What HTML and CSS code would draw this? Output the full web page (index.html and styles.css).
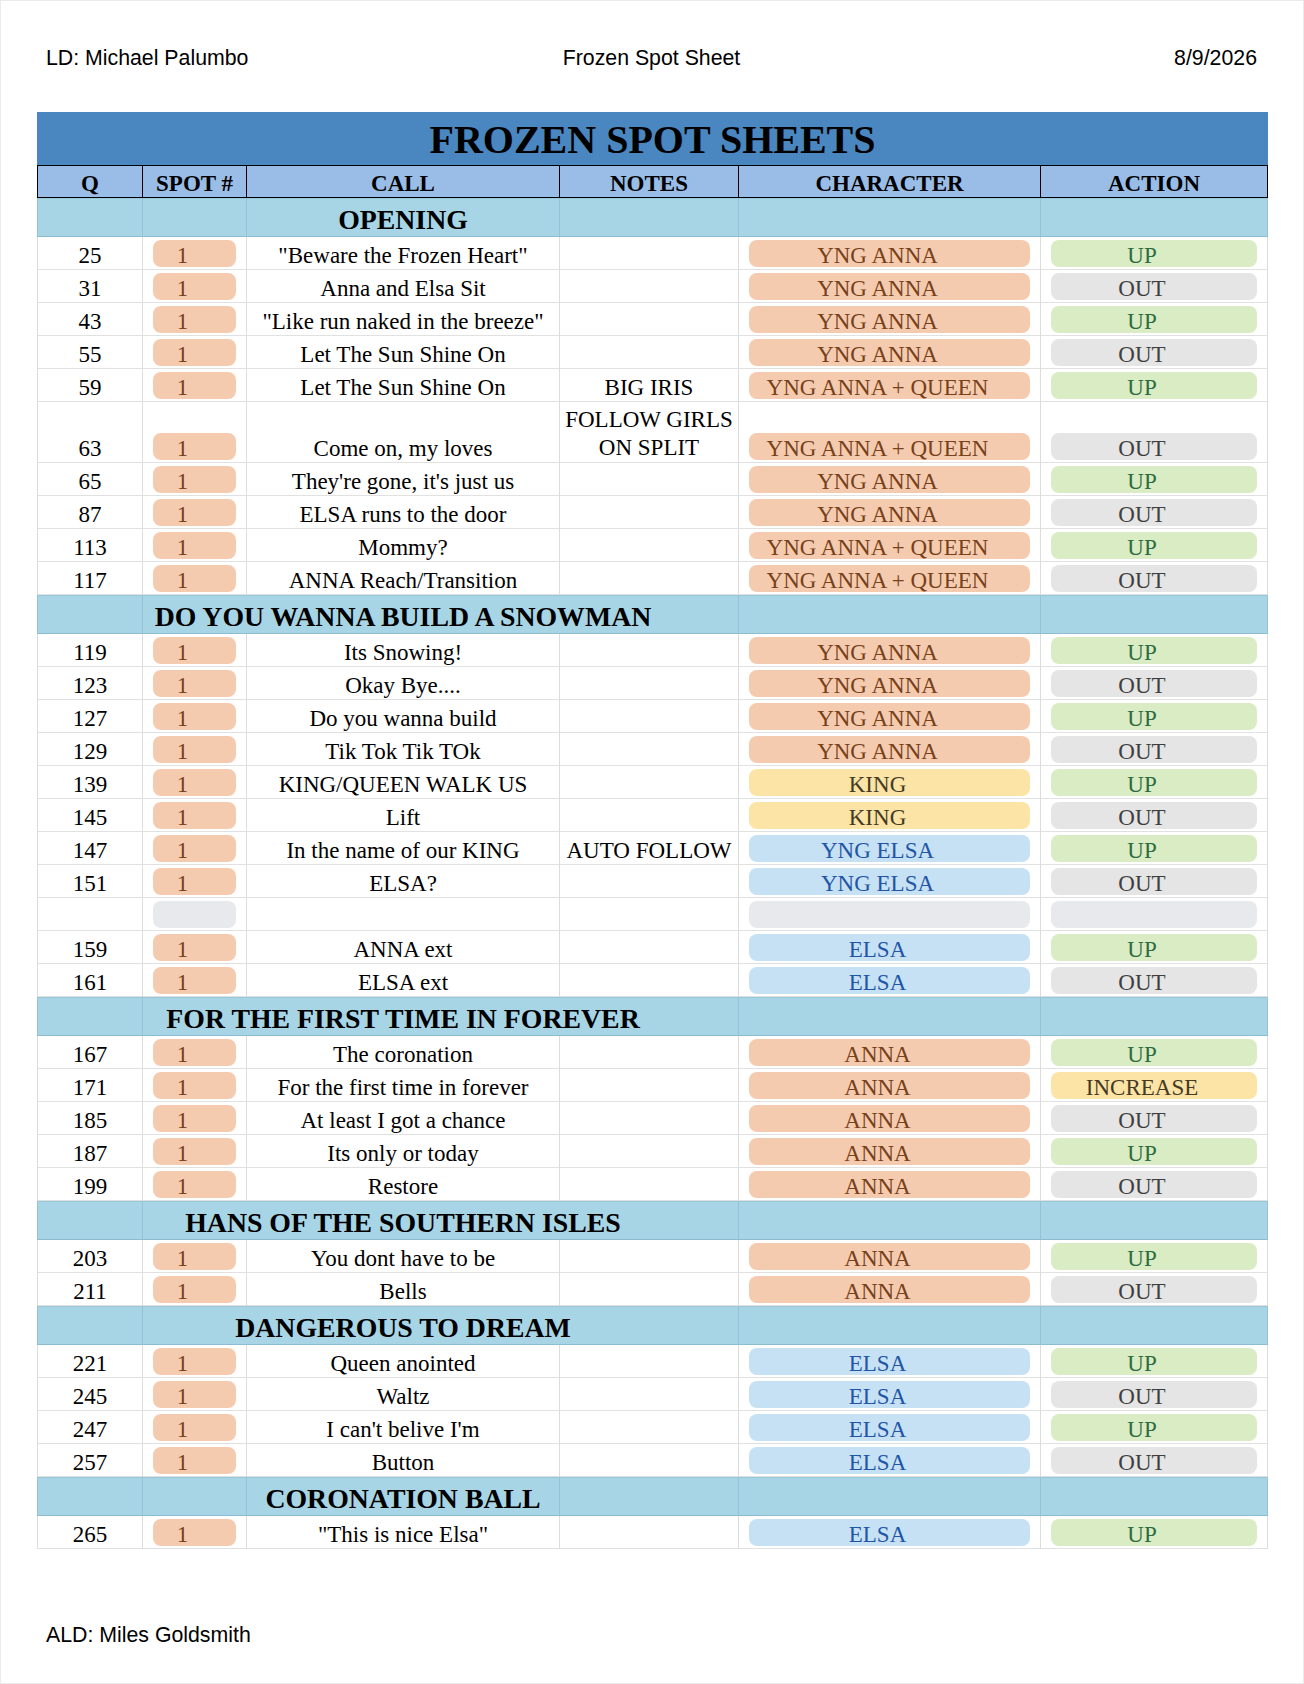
FILE: index.html
```
<!DOCTYPE html>
<html lang="en">
<head>
<meta charset="utf-8">
<title>Frozen Spot Sheet</title>
<link rel="stylesheet" href="styles.css">
</head>
<body>
<div class="page">
  <div class="topbar">
    <div class="l">LD: Michael Palumbo</div>
    <div class="c">Frozen Spot Sheet</div>
    <div class="r">8/9/2026</div>
  </div>

  <div class="sheet">
    <div class="title">FROZEN SPOT SHEETS</div>
    <div class="row head">
      <div>Q</div><div>SPOT #</div><div>CALL</div><div>NOTES</div><div>CHARACTER</div><div>ACTION</div>
    </div>

    <div class="row sec"><div></div><div></div><div class="name"><span>OPENING</span></div><div></div><div></div><div></div></div>
    <div class="row"><div>25</div><div><span class="pill spot">1</span></div><div>"Beware the Frozen Heart"</div><div></div><div><span class="pill anna">YNG ANNA</span></div><div><span class="pill up">UP</span></div></div>
    <div class="row"><div>31</div><div><span class="pill spot">1</span></div><div>Anna and Elsa Sit</div><div></div><div><span class="pill anna">YNG ANNA</span></div><div><span class="pill out">OUT</span></div></div>
    <div class="row"><div>43</div><div><span class="pill spot">1</span></div><div>"Like run naked in the breeze"</div><div></div><div><span class="pill anna">YNG ANNA</span></div><div><span class="pill up">UP</span></div></div>
    <div class="row"><div>55</div><div><span class="pill spot">1</span></div><div>Let The Sun Shine On</div><div></div><div><span class="pill anna">YNG ANNA</span></div><div><span class="pill out">OUT</span></div></div>
    <div class="row"><div>59</div><div><span class="pill spot">1</span></div><div>Let The Sun Shine On</div><div>BIG IRIS</div><div><span class="pill anna">YNG ANNA + QUEEN</span></div><div><span class="pill up">UP</span></div></div>
    <div class="row tall"><div>63</div><div><span class="pill spot">1</span></div><div>Come on, my loves</div><div class="wrap">FOLLOW GIRLS<br>ON SPLIT</div><div><span class="pill anna">YNG ANNA + QUEEN</span></div><div><span class="pill out">OUT</span></div></div>
    <div class="row"><div>65</div><div><span class="pill spot">1</span></div><div>They're gone, it's just us</div><div></div><div><span class="pill anna">YNG ANNA</span></div><div><span class="pill up">UP</span></div></div>
    <div class="row"><div>87</div><div><span class="pill spot">1</span></div><div>ELSA runs to the door</div><div></div><div><span class="pill anna">YNG ANNA</span></div><div><span class="pill out">OUT</span></div></div>
    <div class="row"><div>113</div><div><span class="pill spot">1</span></div><div>Mommy?</div><div></div><div><span class="pill anna">YNG ANNA + QUEEN</span></div><div><span class="pill up">UP</span></div></div>
    <div class="row"><div>117</div><div><span class="pill spot">1</span></div><div>ANNA Reach/Transition</div><div></div><div><span class="pill anna">YNG ANNA + QUEEN</span></div><div><span class="pill out">OUT</span></div></div>

    <div class="row sec"><div></div><div></div><div class="name"><span>DO YOU WANNA BUILD A SNOWMAN</span></div><div></div><div></div><div></div></div>
    <div class="row"><div>119</div><div><span class="pill spot">1</span></div><div>Its Snowing!</div><div></div><div><span class="pill anna">YNG ANNA</span></div><div><span class="pill up">UP</span></div></div>
    <div class="row"><div>123</div><div><span class="pill spot">1</span></div><div>Okay Bye....</div><div></div><div><span class="pill anna">YNG ANNA</span></div><div><span class="pill out">OUT</span></div></div>
    <div class="row"><div>127</div><div><span class="pill spot">1</span></div><div>Do you wanna build</div><div></div><div><span class="pill anna">YNG ANNA</span></div><div><span class="pill up">UP</span></div></div>
    <div class="row"><div>129</div><div><span class="pill spot">1</span></div><div>Tik Tok Tik TOk</div><div></div><div><span class="pill anna">YNG ANNA</span></div><div><span class="pill out">OUT</span></div></div>
    <div class="row"><div>139</div><div><span class="pill spot">1</span></div><div>KING/QUEEN WALK US</div><div></div><div><span class="pill king">KING</span></div><div><span class="pill up">UP</span></div></div>
    <div class="row"><div>145</div><div><span class="pill spot">1</span></div><div>Lift</div><div></div><div><span class="pill king">KING</span></div><div><span class="pill out">OUT</span></div></div>
    <div class="row"><div>147</div><div><span class="pill spot">1</span></div><div>In the name of our KING</div><div>AUTO FOLLOW</div><div><span class="pill elsa">YNG ELSA</span></div><div><span class="pill up">UP</span></div></div>
    <div class="row"><div>151</div><div><span class="pill spot">1</span></div><div>ELSA?</div><div></div><div><span class="pill elsa">YNG ELSA</span></div><div><span class="pill out">OUT</span></div></div>
    <div class="row"><div></div><div><span class="pill empty"></span></div><div></div><div></div><div><span class="pill empty"></span></div><div><span class="pill empty"></span></div></div>
    <div class="row"><div>159</div><div><span class="pill spot">1</span></div><div>ANNA ext</div><div></div><div><span class="pill elsa">ELSA</span></div><div><span class="pill up">UP</span></div></div>
    <div class="row"><div>161</div><div><span class="pill spot">1</span></div><div>ELSA ext</div><div></div><div><span class="pill elsa">ELSA</span></div><div><span class="pill out">OUT</span></div></div>

    <div class="row sec"><div></div><div></div><div class="name"><span>FOR THE FIRST TIME IN FOREVER</span></div><div></div><div></div><div></div></div>
    <div class="row"><div>167</div><div><span class="pill spot">1</span></div><div>The coronation</div><div></div><div><span class="pill anna">ANNA</span></div><div><span class="pill up">UP</span></div></div>
    <div class="row"><div>171</div><div><span class="pill spot">1</span></div><div>For the first time in forever</div><div></div><div><span class="pill anna">ANNA</span></div><div><span class="pill inc">INCREASE</span></div></div>
    <div class="row"><div>185</div><div><span class="pill spot">1</span></div><div>At least I got a chance</div><div></div><div><span class="pill anna">ANNA</span></div><div><span class="pill out">OUT</span></div></div>
    <div class="row"><div>187</div><div><span class="pill spot">1</span></div><div>Its only or today</div><div></div><div><span class="pill anna">ANNA</span></div><div><span class="pill up">UP</span></div></div>
    <div class="row"><div>199</div><div><span class="pill spot">1</span></div><div>Restore</div><div></div><div><span class="pill anna">ANNA</span></div><div><span class="pill out">OUT</span></div></div>

    <div class="row sec"><div></div><div></div><div class="name"><span>HANS OF THE SOUTHERN ISLES</span></div><div></div><div></div><div></div></div>
    <div class="row"><div>203</div><div><span class="pill spot">1</span></div><div>You dont have to be</div><div></div><div><span class="pill anna">ANNA</span></div><div><span class="pill up">UP</span></div></div>
    <div class="row"><div>211</div><div><span class="pill spot">1</span></div><div>Bells</div><div></div><div><span class="pill anna">ANNA</span></div><div><span class="pill out">OUT</span></div></div>

    <div class="row sec"><div></div><div></div><div class="name"><span>DANGEROUS TO DREAM</span></div><div></div><div></div><div></div></div>
    <div class="row"><div>221</div><div><span class="pill spot">1</span></div><div>Queen anointed</div><div></div><div><span class="pill elsa">ELSA</span></div><div><span class="pill up">UP</span></div></div>
    <div class="row"><div>245</div><div><span class="pill spot">1</span></div><div>Waltz</div><div></div><div><span class="pill elsa">ELSA</span></div><div><span class="pill out">OUT</span></div></div>
    <div class="row"><div>247</div><div><span class="pill spot">1</span></div><div>I can't belive I'm</div><div></div><div><span class="pill elsa">ELSA</span></div><div><span class="pill up">UP</span></div></div>
    <div class="row"><div>257</div><div><span class="pill spot">1</span></div><div>Button</div><div></div><div><span class="pill elsa">ELSA</span></div><div><span class="pill out">OUT</span></div></div>

    <div class="row sec"><div></div><div></div><div class="name"><span>CORONATION BALL</span></div><div></div><div></div><div></div></div>
    <div class="row"><div>265</div><div><span class="pill spot">1</span></div><div>"This is nice Elsa"</div><div></div><div><span class="pill elsa">ELSA</span></div><div><span class="pill up">UP</span></div></div>
  </div>

  <div class="footer">ALD: Miles Goldsmith</div>
</div>
</body>
</html>
```
FILE: styles.css
```
* { box-sizing: border-box; }

body {
  margin: 0;
  background: #ffffff;
}

.page {
  width: 1304px;
  height: 1684px;
  border: 1px solid #ebebeb;
  font-family: "Liberation Serif", "Times New Roman", serif;
  color: #000;
  overflow: hidden;
}

.topbar {
  display: grid;
  grid-template-columns: 1fr auto 1fr;
  padding: 45px 46px 0 45px;
  font-family: "Liberation Sans", Arial, sans-serif;
  font-size: 21.3px;
  line-height: 24px;
  color: #000;
}
.topbar .c { text-align: center; }
.topbar .r { text-align: right; }

.sheet {
  margin: 42px 0 0 36px;
  width: 1231px;
}

.title {
  height: 53px;
  background: #4a87c0;
  display: flex;
  align-items: flex-end;
  justify-content: center;
  padding-bottom: 5px;
  font-weight: bold;
  font-size: 40px;
  line-height: 40px;
}

.row {
  display: grid;
  grid-template-columns: 105px 104px 313px 179px 302px 227px;
  border-left: 1px solid #dcdcdc;
}

.row > div {
  height: 33px;
  border-right: 1px solid #dcdcdc;
  border-bottom: 1px solid #e1e1e1;
  display: flex;
  align-items: flex-end;
  justify-content: center;
  text-align: center;
  white-space: nowrap;
  font-size: 23px;
  line-height: 27px;
}

.row.tall > div { height: 61px; }
.row > div.wrap {
  white-space: normal;
  line-height: 28px;
}

/* header row */
.row.head {
  border-top: 1px solid #000;
  border-left-color: #000;
}
.row.head > div {
  height: 32px;
  background: #99bde7;
  border-right-color: #000;
  border-bottom-color: #000;
  font-weight: bold;
}

/* section rows */
.row.sec { border-left-color: #93c3d5; }
.row.sec > div {
  height: 39px;
  background: #a7d5e6;
  border-right-color: #93c3d5;
  border-bottom-color: #8bbcd0;
  box-shadow: inset 0 1px 0 #98c7d9;
}
.row.sec > div.name {
  align-items: stretch;
}
.row.sec .name span {
  position: relative;
  z-index: 1;
  display: flex;
  align-items: flex-end;
  margin-top: 1px;
  padding: 0 2px 1px;
  background: #a7d5e6;
  font-weight: bold;
  font-size: 27.8px;
  line-height: 30px;
}

/* pills */
.pill {
  display: block;
  width: calc(100% - 20px);
  height: 27px;
  margin: 0 10px 2px;
  padding: 3.5px 24px 0 0;
  border-radius: 8px;
  line-height: 24px;
  text-align: center;
}
.pill.spot { background: #f5cbb0; color: #774119; }
.pill.anna { background: #f5cbb0; color: #774119; }
.pill.king { background: #fbe4a6; color: #473a22; }
.pill.elsa { background: #c6e1f4; color: #2255a6; }
.pill.up   { background: #d9ecc3; color: #2d6b40; }
.pill.out  { background: #e5e5e5; color: #3f3f3f; }
.pill.inc  { background: #fbe4a6; color: #473a22; }
.pill.empty { background: #e7e9ec; }

.footer {
  margin-top: 74px;
  padding-left: 45px;
  font-family: "Liberation Sans", Arial, sans-serif;
  font-size: 21.3px;
  line-height: 24px;
}
```
